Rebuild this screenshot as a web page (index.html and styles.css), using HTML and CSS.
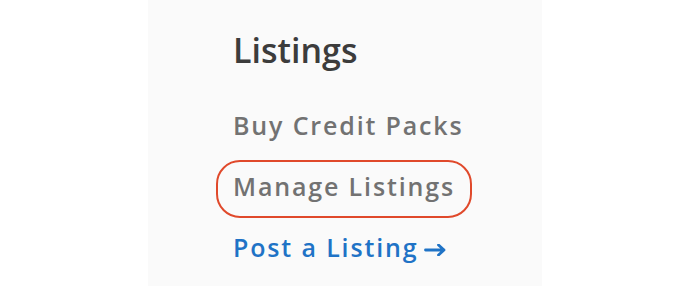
FILE: index.html
```html
<!DOCTYPE html>
<html>
<head>
<meta charset="utf-8">
<link rel="stylesheet" href="styles.css">
</head>
<body>
<nav class="panel">
  <h2 class="title">Listings</h2>
  <ul class="menu">
    <li><a class="item" href="#">Buy Credit Packs</a></li>
    <li><a class="item item-active" href="#">Manage Listings</a></li>
    <li><a class="item item-link" href="#">Post a Listing<svg class="arrow" width="22" height="12" viewBox="0 0 22 12"><path d="M1.5 6H20M14.5 1L20 6L14.5 11" fill="none" stroke="currentColor" stroke-width="2.8" stroke-linecap="round" stroke-linejoin="round"/></svg></a></li>
  </ul>
</nav>
</body>
</html>
```
FILE: styles.css
```css
html, body {
  margin: 0;
  background: #ffffff;
}
body {
  width: 673px;
  height: 291px;
  overflow: hidden;
  font-family: "Open Sans", "Noto Sans", sans-serif;
}
.panel {
  margin-left: 148px;
  width: 394px;
  height: 286px;
  box-sizing: border-box;
  background: #fafafa;
  padding: 30px 0 0 68px;
}
.title {
  margin: 0 0 29px;
  padding-left: 17px;
  font-size: 34px;
  line-height: 40px;
  font-weight: 600;
  color: #3c3c3c;
}
.menu {
  list-style: none;
  margin: 0;
  padding: 0;
  display: flex;
  flex-direction: column;
  align-items: flex-start;
  gap: 3px;
}
.item {
  display: flex;
  align-items: center;
  gap: 6px;
  padding: 0 15px 5px;
  line-height: 49px;
  border: 2px solid transparent;
  border-radius: 24px;
  font-size: 25px;
  font-weight: 600;
  letter-spacing: 1.85px;
  color: #727272;
  text-decoration: none;
}
.item-active {
  border-color: #e0492b;
}
.item-link {
  color: #1f73c6;
}
.arrow {
  margin-top: 4px;
}
```
